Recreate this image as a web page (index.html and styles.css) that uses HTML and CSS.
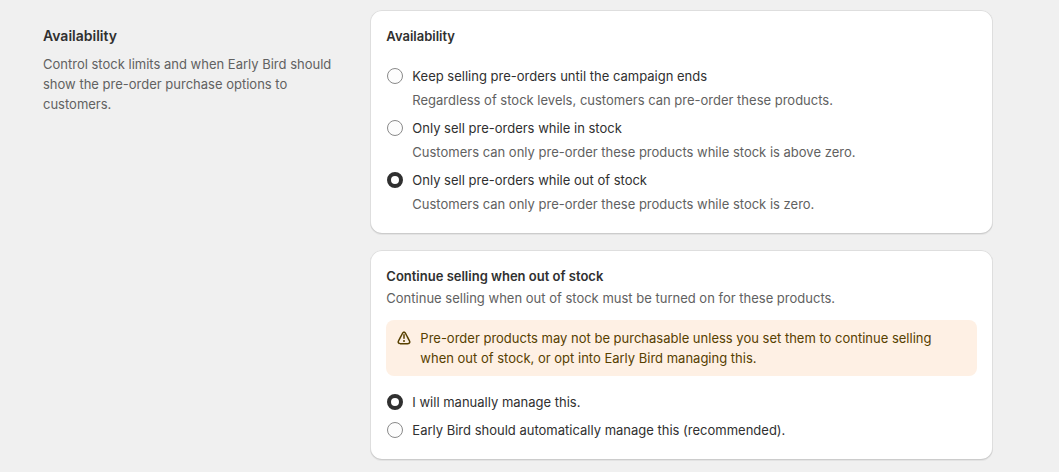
FILE: index.html
```html
<!DOCTYPE html>
<html lang="en">
<head>
    <meta charset="UTF-8">
    <meta name="viewport" content="width=device-width, initial-scale=1.0">
    <title>Availability</title>
    <link rel="stylesheet" href="styles.css">
</head>
<body>
    <main class="page">
        <div class="section-intro">
            <h2>Availability</h2>
            <p>Control stock limits and when Early Bird should show the pre-order purchase options to customers.</p>
        </div>

        <div class="cards">
            <section class="card availability">
                <h3 id="availability-title">Availability</h3>
                <div class="choices" role="radiogroup" aria-labelledby="availability-title">
                    <div class="choice">
                        <input type="radio" name="availability" id="until-end" aria-describedby="until-end-help">
                        <label for="until-end">Keep selling pre-orders until the campaign ends</label>
                        <p class="help" id="until-end-help">Regardless of stock levels, customers can pre-order these products.</p>
                    </div>
                    <div class="choice">
                        <input type="radio" name="availability" id="in-stock" aria-describedby="in-stock-help">
                        <label for="in-stock">Only sell pre-orders while in stock</label>
                        <p class="help" id="in-stock-help">Customers can only pre-order these products while stock is above zero.</p>
                    </div>
                    <div class="choice">
                        <input type="radio" name="availability" id="out-of-stock" aria-describedby="out-of-stock-help" checked>
                        <label for="out-of-stock">Only sell pre-orders while out of stock</label>
                        <p class="help" id="out-of-stock-help">Customers can only pre-order these products while stock is zero.</p>
                    </div>
                </div>
            </section>

            <section class="card">
                <h3 id="continue-title">Continue selling when out of stock</h3>
                <p class="subtitle">Continue selling when out of stock must be turned on for these products.</p>
                <div class="banner">
                    <svg class="banner-icon" viewBox="0 0 20 20" aria-hidden="true">
                        <path d="M10 6a.75.75 0 0 1 .75.75v3.5a.75.75 0 0 1-1.5 0v-3.5a.75.75 0 0 1 .75-.75Z"/>
                        <path d="M11 13a1 1 0 1 1-2 0 1 1 0 0 1 2 0Z"/>
                        <path fill-rule="evenodd" d="M10 3.5c-1.045 0-1.784.702-2.152 1.447a449.26 449.26 0 0 1-2.005 3.847l-.028.052a403.426 403.426 0 0 0-2.008 3.856c-.372.752-.478 1.75.093 2.614.57.863 1.542 1.184 2.464 1.184h7.272c.922 0 1.895-.32 2.464-1.184.57-.864.465-1.862.093-2.614-.21-.424-1.113-2.147-2.004-3.847l-.032-.061a429.497 429.497 0 0 1-2.005-3.847c-.368-.745-1.107-1.447-2.152-1.447Zm-.808 2.112c.404-.816 1.212-.816 1.616 0 .202.409 1.112 2.145 2.022 3.88a418.904 418.904 0 0 1 2.018 3.875c.404.817 0 1.633-1.212 1.633h-7.272c-1.212 0-1.617-.816-1.212-1.633.202-.408 1.113-2.147 2.023-3.883a421.932 421.932 0 0 0 2.017-3.872Z"/>
                    </svg>
                    <p>Pre-order products may not be purchasable unless you set them to continue selling when out of stock, or opt into Early Bird managing this.</p>
                </div>
                <div class="choices" role="radiogroup" aria-labelledby="continue-title">
                    <div class="choice">
                        <input type="radio" name="manage" id="manual" checked>
                        <label for="manual">I will manually manage this.</label>
                    </div>
                    <div class="choice">
                        <input type="radio" name="manage" id="automatic">
                        <label for="automatic">Early Bird should automatically manage this (recommended).</label>
                    </div>
                </div>
            </section>
        </div>
    </main>
</body>
</html>
```

FILE: styles.css
```css
* {
    box-sizing: border-box;
}
body {
    margin: 0;
    background-color: #f0f0f0;
    color: #303030;
    font-family: Inter, sans-serif;
    font-size: 13px;
    font-weight: 420;
    line-height: 20px;
}
h2, h3, p {
    margin: 0;
}
h2, h3 {
    font-size: 13px;
    font-weight: 620;
}
h2 {
    font-size: 14px;
}
.page {
    display: grid;
    grid-template-columns: 1fr 2fr;
    gap: 16px;
    max-width: 997px;
    margin: 0 auto;
    padding: 10px 35px 12px 12px;
}
.section-intro {
    padding: 16px 16px 0 0;
    color: #616161;
}
.section-intro h2 {
    margin-bottom: 8px;
    color: #303030;
}
.cards {
    display: flex;
    flex-direction: column;
    gap: 16px;
}
.card {
    padding: 16px;
    background-color: #fff;
    border-radius: 12px;
    box-shadow: 0 1px 0 #e3e3e3, inset 0 -1px 0 #ccc, inset 0 0 0 1px #dedede;
}
.availability h3 {
    margin-bottom: 16px;
}
.choice {
    display: grid;
    grid-template-columns: 18px 1fr;
    column-gap: 8px;
    padding: 4px 0;
}
.choice input {
    appearance: none;
    width: 16px;
    height: 16px;
    margin: 2px 1px;
    border: 1px solid #8a8a8a;
    border-radius: 50%;
    background-color: #fdfdfd;
}
.choice input:checked {
    border: 4px solid #303030;
    background-color: #fff;
}
.help {
    grid-column: 2;
    margin-top: 4px;
    color: #616161;
}
.subtitle {
    margin-top: 2px;
    color: #616161;
}
.banner {
    display: flex;
    gap: 6px;
    margin: 12px 0;
    padding: 8px 16px 8px 8px;
    border-radius: 8px;
    background-color: #fef0e4;
    color: #574000;
}
.banner-icon {
    flex: none;
    width: 20px;
    height: 20px;
    fill: currentColor;
}
```
